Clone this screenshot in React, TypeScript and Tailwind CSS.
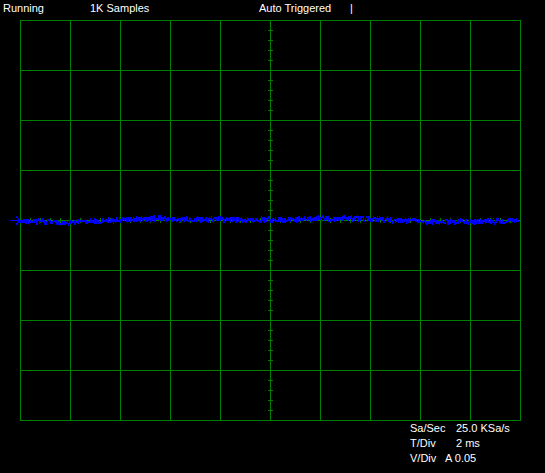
import React from 'react';

// grid geometry: 10 x 8 divisions of 50px, origin at (20,20) of the page
const COLS = 10;
const ROWS = 8;
const DIV = 50;

function rand(seed: number) {
  let s = seed;
  return () => {
    s = (s * 1103515245 + 12345) & 0x7fffffff;
    return s / 0x7fffffff;
  };
}

// rough shape of the baseline drift seen on the trace
const DRIFT: [number, number][] = [
  [10, 0], [20, 1], [60, 2.5], [100, 1], [150, -1.5], [200, -0.5], [250, 0],
  [300, -0.5], [350, -1.8], [400, 0.5], [440, 2.2], [480, 1.5], [520, 0],
];

function driftAt(x: number) {
  for (let i = 1; i < DRIFT.length; i++) {
    const [x0, y0] = DRIFT[i - 1];
    const [x1, y1] = DRIFT[i];
    if (x <= x1) return y0 + ((y1 - y0) * (x - x0)) / (x1 - x0);
  }
  return 0;
}

function buildTrace() {
  const r = rand(11);
  const pts: string[] = [];
  for (let x = 20; x <= 519; x += 0.5) {
    const noise = (r() - 0.5) * 5.5;
    pts.push(`${x},${Math.round(200 + driftAt(x) + noise)}`);
  }
  return pts.join(' ');
}

const trace = buildTrace();

function Graticule() {
  const lines = [];
  for (let i = 0; i <= COLS; i++) {
    const x = 20 + i * DIV + 0.5;
    lines.push(<line key={`v${i}`} x1={x} y1={0} x2={x} y2={400} />);
  }
  for (let j = 0; j <= ROWS; j++) {
    const y = j * DIV + 0.5;
    lines.push(<line key={`h${j}`} x1={20} y1={y} x2={521} y2={y} />);
  }
  const ticks = [];
  for (let y = 10; y < 400; y += 10) {
    ticks.push(<line key={`ty${y}`} x1={268} y1={y + 0.5} x2={273} y2={y + 0.5} />);
  }
  for (let x = 30; x < 520; x += 10) {
    ticks.push(<line key={`tx${x}`} x1={x + 0.5} y1={198} x2={x + 0.5} y2={203} />);
  }
  return (
    <svg width={545} height={401} className="block" shapeRendering="crispEdges">
      <g stroke="#008000" strokeWidth={1}>
        {lines}
        {ticks}
      </g>
      <polyline points={trace} fill="none" stroke="#0000ff" strokeWidth={1.2} />
      <g stroke="#0000ff" strokeWidth={1} fill="none">
        <line x1={10} y1={200.5} x2={21} y2={200.5} />
        <polyline points="16,196.5 20,200.5 16,204.5" />
      </g>
    </svg>
  );
}

export default function App() {
  return (
    <div
      className="w-[545px] h-[473px] bg-black text-white text-[11px] leading-none overflow-hidden"
      style={{ fontFamily: '"Liberation Sans", Arial, sans-serif' }}
    >
      {/* status bar */}
      <div className="h-[20px] flex items-start pt-[3px] pl-[3px]">
        <span className="w-[87px]">Running</span>
        <span className="w-[169px]">1K Samples</span>
        <span className="w-[91px]">Auto Triggered</span>
        <span>|</span>
      </div>

      <Graticule />

      {/* readouts */}
      <div className="pl-[410px] pt-[2px] grid grid-cols-[35px_auto] gap-y-[4px]">
        <span>Sa/Sec</span>
        <span className="pl-[11px]">25.0 KSa/s</span>
        <span>T/Div</span>
        <span className="pl-[11px]">2 ms</span>
        <span>V/Div</span>
        <span>A 0.05</span>
      </div>
    </div>
  );
}
